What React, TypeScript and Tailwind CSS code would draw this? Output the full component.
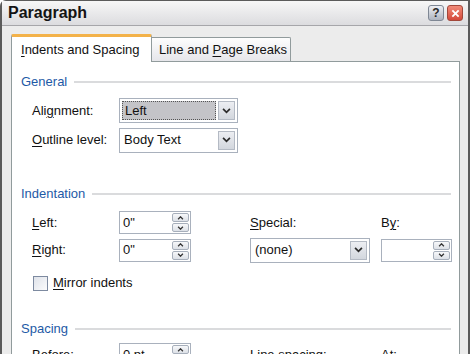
import React from 'react';

const font = { fontFamily: '"Liberation Sans", Arial, sans-serif' };

const Chevron: React.FC = () => (
  <svg viewBox="0 0 10 7" className="w-[9px] h-[6px]">
    <polyline points="1,1 5,5 9,1" fill="none" stroke="#2b2b2b" strokeWidth="2" />
  </svg>
);

const SelectBox: React.FC<{ value: string; focused?: boolean; width: string }> = ({ value, focused, width }) => (
  <div className={`${width} h-[25px] flex items-stretch border border-[#a9b1bd] bg-white p-[2px]`}>
    <div
      className={`flex-1 flex items-center pl-[2px] text-[13px] text-[#111] ${
        focused ? 'bg-[#c4c4c8] border border-dotted border-[#555]' : ''
      }`}
    >
      {value}
    </div>
    <div className="w-[17px] ml-[2px] flex items-center justify-center bg-gradient-to-b from-[#eceef2] to-[#d3d7de] border border-[#b4bac4]">
      <Chevron />
    </div>
  </div>
);

const Spin: React.FC = () => (
  <div className="flex flex-col gap-[1px] w-[17px]">
    <div className="h-[9px] flex items-center justify-center rounded-[2px] border border-[#a7afbb] bg-gradient-to-b from-[#f7f8fa] to-[#dde1e7]">
      <svg viewBox="0 0 8 5" className="w-[7px] h-[4px]">
        <polyline points="1,4 4,1 7,4" fill="none" stroke="#333" strokeWidth="1.6" />
      </svg>
    </div>
    <div className="h-[9px] flex items-center justify-center rounded-[2px] border border-[#a7afbb] bg-gradient-to-b from-[#f7f8fa] to-[#dde1e7]">
      <svg viewBox="0 0 8 5" className="w-[7px] h-[4px]">
        <polyline points="1,1 4,4 7,1" fill="none" stroke="#333" strokeWidth="1.6" />
      </svg>
    </div>
  </div>
);

const SpinBox: React.FC<{ value: string; width: string }> = ({ value, width }) => (
  <div className={`${width} h-[23px] flex items-center justify-between border border-[#a9b1bd] bg-white pl-[3px] pr-[1px]`}>
    <span className="text-[13px] text-[#111]">{value}</span>
    <Spin />
  </div>
);

const Section: React.FC<{ title: string }> = ({ title }) => (
  <div className="flex items-center gap-[7px] h-[16px] pr-[6px]">
    <span className="text-[13px] text-[#1e5aa6]">{title}</span>
    <div className="flex-1 h-[2px] bg-[#dadbdd]" />
  </div>
);

const Label: React.FC<{ k: string; rest: string; pre?: string; className?: string }> = ({ k, rest, pre, className }) => (
  <span className={`text-[13px] text-[#111] ${className ?? ''}`}>
    {pre}
    <span className="underline underline-offset-2">{k}</span>
    {rest}
  </span>
);

export default function App() {
  return (
    <div className="w-[474px] h-[354px] bg-white overflow-hidden" style={font}>
      <div className="w-[470px] h-[354px] flex flex-col bg-[#ececec] border-l-2 border-t border-r-2 border-[#5b5b5b] rounded-tl-[6px]">
        {/* title bar */}
        <div className="h-[26px] flex items-center justify-between pl-[6px] pr-[5px] bg-gradient-to-b from-[#f7f7f7] to-[#dcdcdf] border-b border-[#a6a6aa]">
          <span className="text-[16px] font-bold text-[#141414]">Paragraph</span>
          <div className="flex gap-[3px]">
            <div className="w-[16px] h-[16px] rounded-[3px] border border-[#7f8794] bg-gradient-to-b from-[#eef0f4] to-[#aeb4c0] flex items-center justify-center text-[12px] font-bold text-[#2a2a2a] leading-none">
              ?
            </div>
            <div className="w-[16px] h-[16px] rounded-[3px] border border-[#a2473a] bg-gradient-to-b from-[#f08a78] to-[#d4473a] flex items-center justify-center">
              <svg viewBox="0 0 10 10" className="w-[9px] h-[9px]">
                <path d="M1.5 1.5 L8.5 8.5 M8.5 1.5 L1.5 8.5" stroke="white" strokeWidth="2" />
              </svg>
            </div>
          </div>
        </div>

        {/* body */}
        <div className="flex-1 pl-[9px] pr-[8px] pt-[7px]">
          {/* tabs */}
          <div className="flex items-end h-[28px]">
            <div className="w-[141px] h-[28px] bg-white border border-[#919b9c] border-b-0 border-t-[3px] border-t-[#f3b24a] rounded-t-[2px] flex items-center pl-[9px] relative z-10 -mb-px">
              <Label k="I" rest="ndents and Spacing" />
            </div>
            <div className="w-[139px] h-[24px] bg-gradient-to-b from-[#fdfdfd] to-[#e6e6ea] border border-[#919b9c] border-l-0 border-b-0 rounded-tr-[2px] flex items-center pl-[7px]">
              <Label pre="Line and " k="P" rest="age Breaks" />
            </div>
          </div>

          {/* panel */}
          <div className="h-[300px] bg-white border border-[#919b9c] pl-[9px] pr-[2px] pt-[12px]">
            <Section title="General" />
            <div className="flex items-center h-[25px] mt-[8px]">
              <Label pre="Ali" k="g" rest="nment:" className="w-[98px] pl-[11px]" />
              <SelectBox value="Left" focused width="w-[119px]" />
            </div>
            <div className="flex items-center h-[26px] mt-[4px]">
              <Label k="O" rest="utline level:" className="w-[98px] pl-[11px]" />
              <SelectBox value="Body Text" width="w-[119px]" />
            </div>

            <div className="mt-[33px]">
              <Section title="Indentation" />
            </div>
            <div className="flex items-center h-[23px] mt-[9px]">
              <Label k="L" rest="eft:" className="w-[98px] pl-[11px]" />
              <SpinBox value={'0"'} width="w-[72px]" />
              <Label k="S" rest="pecial:" className="ml-[59px] w-[131px]" />
              <Label pre="B" k="y" rest=":" />
            </div>
            <div className="flex items-center h-[26px] mt-[3px]">
              <Label k="R" rest="ight:" className="w-[98px] pl-[11px]" />
              <SpinBox value={'0"'} width="w-[72px]" />
              <div className="ml-[59px]">
                <SelectBox value="(none)" width="w-[120px]" />
              </div>
              <div className="ml-[11px]">
                <SpinBox value="" width="w-[71px]" />
              </div>
            </div>
            <div className="flex items-center h-[16px] mt-[12px] pl-[12px] gap-[5px]">
              <div className="w-[15px] h-[15px] border border-[#7d8aa0] bg-gradient-to-br from-[#dfe3ea] to-[#fbfbfc]" />
              <Label k="M" rest="irror indents" />
            </div>

            <div className="mt-[30px]">
              <Section title="Spacing" />
            </div>
            <div className="flex items-center h-[23px] mt-[6px]">
              <Label pre="" k="B" rest="efore:" className="w-[98px] pl-[11px]" />
              <SpinBox value="0 pt" width="w-[72px]" />
              <Label pre="Li" k="n" rest="e spacing:" className="ml-[59px] w-[131px]" />
              <Label k="A" rest="t:" />
            </div>
          </div>
        </div>
      </div>
    </div>
  );
}
